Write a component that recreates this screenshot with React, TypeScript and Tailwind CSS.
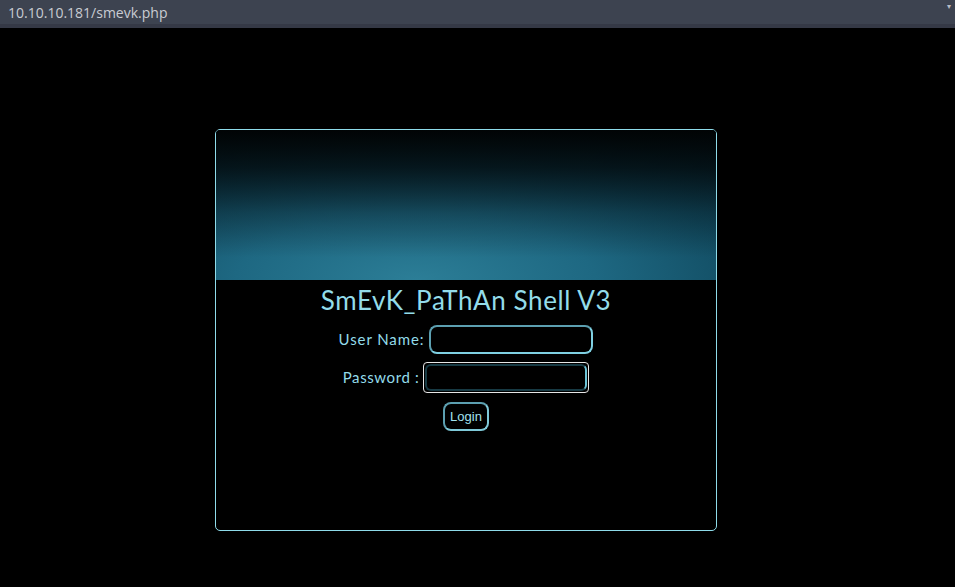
export default function App() {
  return (
    <div className="min-h-[587px] w-[955px] bg-black font-['Lato',sans-serif]">
      {/* browser url strip */}
      <div className="flex h-6 items-center justify-between bg-[#3d4350] pl-2 pr-1 text-[14px] text-[#c9ccd3] font-['Open_Sans',sans-serif]">
        <span>10.10.10.181/smevk.php</span>
        <span className="mb-3 text-[8px] text-[#b8bcc6]">▾</span>
      </div>
      <div className="h-1 bg-[#353946]" />

      <div className="pl-[215px] pt-[101px]">
        <div className="h-[402px] w-[502px] overflow-hidden rounded-[5px] border border-[#8fdcea]">
          <div className="h-[150px] w-full bg-[linear-gradient(to_bottom,#010405_0%,rgba(1,4,5,0.75)_25%,rgba(1,4,5,0.3)_55%,transparent_85%),radial-gradient(ellipse_120%_140%_at_40%_100%,#2c7e97_0%,#1e6882_30%,#124d63_55%,#0a3444_80%,#04161e_100%)]" />

          <div className="flex flex-col items-center text-[#93dcea]">
            <h1 className="mt-[5px] text-[26px] leading-[30px] tracking-[0.6px]">SmEvK_PaThAn Shell V3</h1>

            <div className="mt-[10px] flex items-center gap-[5px]">
              <span className="text-[15px] tracking-[0.9px]">User Name:</span>
              <div className="h-[29px] w-[164px] rounded-[8px] border-2 border-[#7fd0e2] border-t-[#5c9fb0] border-l-[#5c9fb0] bg-black" />
            </div>

            <div className="mt-[8px] flex items-center gap-[4px]">
              <span className="text-[15px] tracking-[0.6px]">Password :</span>
              <div className="h-[31px] w-[166px] rounded-[4px] border border-[#e6e6e6] p-px">
                <div className="h-full w-full rounded-[6px] border-2 border-[#173a44] border-r-[#6cc3d6] bg-black" />
              </div>
            </div>

            <button className="mt-[9px] h-[29px] rounded-[8px] border-2 border-[#7fc9d8] border-t-[#5c9fb0] border-l-[#5c9fb0] bg-black px-[5px] font-['Liberation_Sans',sans-serif] text-[13px] text-[#a2e2ee]">
              Login
            </button>
          </div>
        </div>
      </div>
    </div>
  );
}
